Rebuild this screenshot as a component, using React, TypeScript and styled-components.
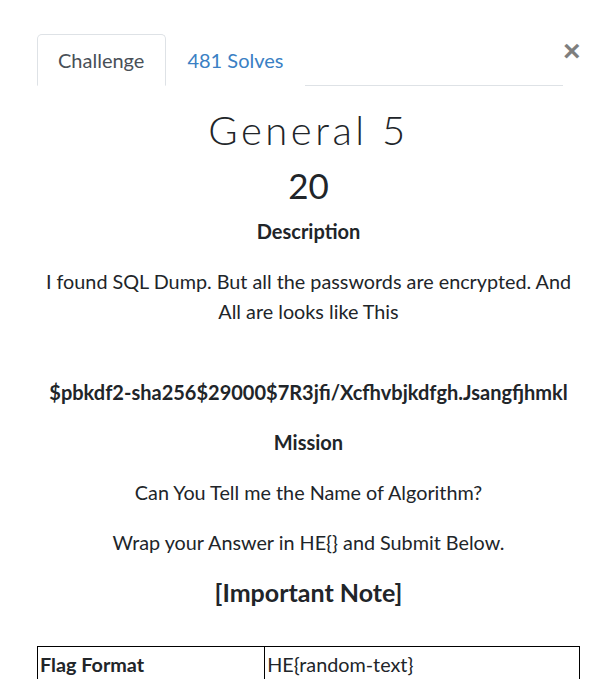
import React from "react";
import styled, { createGlobalStyle } from "styled-components";

const Global = createGlobalStyle`
  html, body { margin: 0; padding: 0; background: #fff; }
  body {
    font-family: "Lato", "Liberation Sans", sans-serif;
    font-size: 19.8px;
    line-height: 30px;
    color: #212529;
  }
  strong { font-size: 20px; }
  * { box-sizing: border-box; }
`;

const ModalBody = styled.div`
  width: 598px;
  padding: 34px 18px 0 37px;
`;

const Header = styled.div`
  display: flex;
  align-items: flex-start;
`;

const Tabs = styled.ul`
  flex: 1;
  display: flex;
  list-style: none;
  margin: 0;
  padding: 0;
  border-bottom: 1px solid #dee2e6;
`;

const Tab = styled.li<{ $active?: boolean }>`
  margin-bottom: -1px;
  padding: 10px 21px 10px 20px;
  border: 1px solid ${(p) => (p.$active ? "#dee2e6" : "transparent")};
  border-bottom-color: ${(p) => (p.$active ? "#fff" : "transparent")};
  border-radius: 5px 5px 0 0;
  background: #fff;
  color: ${(p) => (p.$active ? "#495057" : "#3a80c4")};
  font-size: 20px;
  line-height: 30px;
  cursor: pointer;
`;

const Close = styled.button`
  border: 0;
  background: transparent;
  padding: 0;
  margin: 2px 0 0 0;
  width: 17px;
  font-family: "Liberation Sans", Arial, sans-serif;
  font-size: 30px;
  font-weight: 700;
  line-height: 30px;
  color: #000;
  opacity: 0.5;
  cursor: pointer;
`;

const Content = styled.div`
  text-align: center;
`;

const Name = styled.h2`
  margin: 0 0 10px;
  padding-top: 20px;
  font-family: "Lato", sans-serif;
  font-weight: 300;
  font-size: 40px;
  letter-spacing: 3.5px;
  line-height: 48px;
`;

const Value = styled.h3`
  margin: 0 0 10px;
  font-weight: 400;
  font-size: 35px;
  line-height: 42px;
`;

const P = styled.p<{ $gapTop?: number }>`
  margin: ${(p) => p.$gapTop ?? 0}px 0 20px;
`;

const Note = styled.h4`
  margin: 0 0 39px;
  font-size: 25px;
  font-weight: 700;
  line-height: 30px;
`;

const Table = styled.table`
  width: 543px;
  border-collapse: collapse;
  text-align: left;
`;

const Cell = styled.td<{ $bold?: boolean }>`
  border: 1px solid #000;
  padding: 2px 2px;
  font-weight: ${(p) => (p.$bold ? 700 : 400)};
  height: 60px;
  vertical-align: top;
`;

export default function App() {
  return (
    <>
      <Global />
      <ModalBody>
        <Header>
          <Tabs>
            <Tab $active>Challenge</Tab>
            <Tab>481 Solves</Tab>
          </Tabs>
          <Close aria-label="Close">×</Close>
        </Header>
        <Content>
          <Name>General 5</Name>
          <Value>20</Value>
          <P>
            <strong>Description</strong>
          </P>
          <P>
            I found SQL Dump. But all the passwords are encrypted. And All are looks like This
          </P>
          <P $gapTop={51}>
            <strong>$pbkdf2-sha256$29000$7R3jfi/Xcfhvbjkdfgh.Jsangfjhmkl</strong>
          </P>
          <P>
            <strong>Mission</strong>
          </P>
          <P>Can You Tell me the Name of Algorithm?</P>
          <P>Wrap your Answer in HE{"{}"} and Submit Below.</P>
          <Note>[Important Note]</Note>
          <Table>
            <tbody>
              <tr>
                <Cell $bold>Flag Format</Cell>
                <Cell>HE{"{random-text}"}</Cell>
              </tr>
            </tbody>
          </Table>
        </Content>
      </ModalBody>
    </>
  );
}
